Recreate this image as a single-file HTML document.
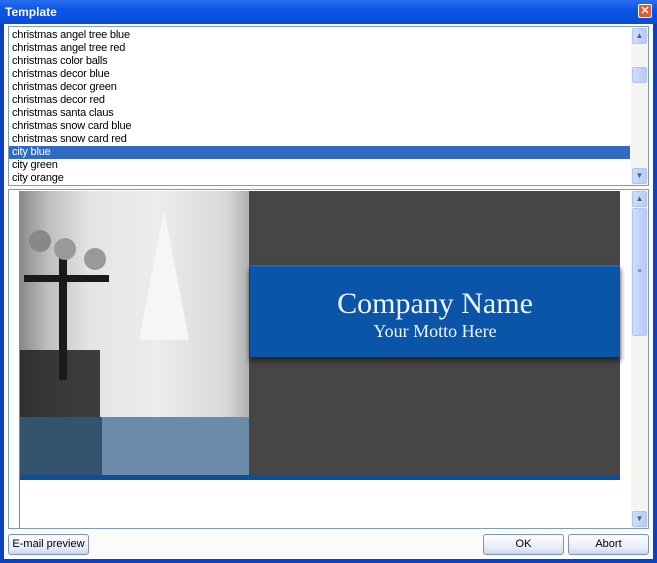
<!DOCTYPE html>
<html><head><style>
*{margin:0;padding:0;box-sizing:border-box}
body{width:657px;height:563px;overflow:hidden;background:#0a3fc6;font-family:"Liberation Sans",sans-serif;position:relative}
.title{position:absolute;left:0;top:0;width:657px;height:24px;background:linear-gradient(#2a6ff0,#0a55e6 40%,#0a4bd8);color:#fff;font-weight:bold;font-size:12px;padding:5px 0 0 5px}
.close{position:absolute;right:5px;top:4px;width:14px;height:14px;background:#e25a2c;border:1px solid #fff;border-radius:2px;color:#fff;font-size:11px;line-height:12px;text-align:center;font-weight:bold}
.body{position:absolute;left:4px;top:24px;width:649px;height:535px;background:#fbfbf7}
.list{position:absolute;left:8px;top:26px;width:641px;height:160px;background:#fff;border:1px solid #7f9db9}
.item{height:13px;font-size:11px;line-height:13px;padding-left:3px;color:#000;letter-spacing:-0.2px}
.sel{background:#316ac5;color:#fff;margin-right:18px}
.sb{position:absolute;right:0;top:0;width:17px;height:100%;background:#f4f4f0}
.sbb{position:absolute;left:1px;width:15px;height:16px;background:linear-gradient(90deg,#cfdcfb,#b8cbf5);border:1px solid #b0c4ee;border-radius:2px;color:#4d6185;font-size:8px;text-align:center;line-height:14px}
.prev{position:absolute;left:8px;top:189px;width:641px;height:340px;background:#fff;border:1px solid #7f9db9}
.btn{position:absolute;height:21px;border:1px solid #7a93c0;border-radius:3px;background:linear-gradient(#fff,#e6ebf7 70%,#cad6ee);font-size:11px;text-align:center;line-height:19px;color:#000}
</style></head><body>
<div class="title">Template<div class="close">✕</div></div>
<div class="body"></div>
<div class="list">
<div style="padding-top:2px">
<div class="item">christmas angel tree blue</div>
<div class="item">christmas angel tree red</div>
<div class="item">christmas color balls</div>
<div class="item">christmas decor blue</div>
<div class="item">christmas decor green</div>
<div class="item">christmas decor red</div>
<div class="item">christmas santa claus</div>
<div class="item">christmas snow card blue</div>
<div class="item">christmas snow card red</div>
<div class="item sel">city blue</div>
<div class="item">city green</div>
<div class="item">city orange</div>
</div>
<div class="sb">
<div class="sbb" style="top:1px">▲</div>
<div class="sbb" style="top:40px"></div>
<div class="sbb" style="bottom:1px">▼</div>
</div>
</div>
<div class="prev">
<div style="position:absolute;left:11px;top:1px;width:229px;height:286px;background:linear-gradient(90deg,#8a8a8a 0,#bdbdbd 12%,#e4e4e4 30%,#ececec 60%,#d8d8d8 90%,#b0b0b0)"></div>
<div style="position:absolute;left:11px;top:227px;width:229px;height:60px;background:#6c8aaa"></div>
<div style="position:absolute;left:11px;top:227px;width:82px;height:60px;background:#34536f"></div>
<div style="position:absolute;left:11px;top:160px;width:80px;height:67px;background:#1e1e1e;opacity:.85"></div>
<div style="position:absolute;left:50px;top:60px;width:8px;height:130px;background:#1a1a1a"></div>
<div style="position:absolute;left:15px;top:85px;width:85px;height:7px;background:#1a1a1a"></div>
<div style="position:absolute;left:20px;top:40px;width:22px;height:22px;border-radius:50%;background:#888"></div>
<div style="position:absolute;left:45px;top:48px;width:22px;height:22px;border-radius:50%;background:#999"></div>
<div style="position:absolute;left:75px;top:58px;width:22px;height:22px;border-radius:50%;background:#999"></div>
<div style="position:absolute;left:130px;top:20px;width:0;height:0;border-left:25px solid transparent;border-right:25px solid transparent;border-bottom:130px solid #f6f6f6"></div>
<div style="position:absolute;left:240px;top:1px;width:371px;height:286px;background:#464646"></div>
<div style="position:absolute;left:241px;top:75px;width:370px;height:92px;background:#0a55a8;border-top:2px solid #1466c0;box-shadow:0 4px 5px #222;text-align:center;color:#eef4ff;font-family:'Liberation Serif',serif">
<div style="font-size:30px;margin-top:20px;line-height:34px">Company Name</div>
<div style="font-size:18px;line-height:20px">Your Motto Here</div>
</div>
<div style="position:absolute;left:11px;top:285px;width:600px;height:5px;background:#0a4f9a"></div>
<div style="position:absolute;left:10px;top:1px;width:1px;height:338px;background:#888"></div>
<div class="sb">
<div class="sbb" style="top:1px">▲</div>
<div class="sbb" style="top:18px;height:128px;font-size:7px;line-height:126px">≡</div>
<div class="sbb" style="bottom:1px">▼</div>
</div>
</div>
<div class="btn" style="left:8px;top:534px;width:81px">E-mail preview</div>
<div class="btn" style="left:483px;top:534px;width:81px">OK</div>
<div class="btn" style="left:568px;top:534px;width:81px">Abort</div>
</body></html>
